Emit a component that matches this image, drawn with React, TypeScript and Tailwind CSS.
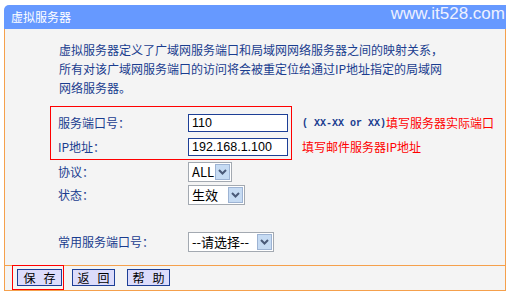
import React from "react";

const Chevron = () => (
  <svg width="9" height="6" viewBox="0 0 9 6">
    <path d="M1 1 L4.5 4.5 L8 1" fill="none" stroke="#4a5a78" strokeWidth="2" />
  </svg>
);

function Select({ w, text }: { w: string; text: string }) {
  return (
    <div className={`flex h-[20px] ${w} items-center border border-[#a3a9b1] bg-white`}>
      <span className="flex-1 whitespace-nowrap pl-[3px] text-[13px] leading-[18px] text-black">{text}</span>
      <span className="mr-px flex h-[16px] w-[15px] items-center justify-center border border-[#9db3d3] bg-[#c6dbf3]">
        <Chevron />
      </span>
    </div>
  );
}

function Btn({ a, b, w }: { a: string; b: string; w: string }) {
  return (
    <div className={`flex h-[17px] ${w} items-center justify-center gap-[8px] border border-[#1d3f96] bg-[#dcdcfb] text-[12px] leading-[12px] text-black`}>
      <span>{a}</span>
      <span>{b}</span>
    </div>
  );
}

export default function App() {
  return (
    <div className="h-[294px] w-[509px] bg-white pl-[4px] pt-[5px] font-['Noto_Sans_CJK_SC','Liberation_Sans',sans-serif]">
      <div className="relative w-[502px]">
        <div className="flex h-[24px] items-center rounded-tl-[5px] bg-[#6699ff] pl-[7px] text-[12px] text-white">
          虚拟服务器
        </div>
        <span className="absolute right-[1px] top-0 font-['Liberation_Sans',sans-serif] text-[17px] leading-[17px] text-[#eef1ff]">
          www.it528.com
        </span>
        <div className="border-x border-b border-[#f5a04c] bg-[#f4f4f4]">
          <div className="h-[236px] pt-[11px] text-[12px] text-[#1a3d8f]">
            <p className="ml-[54px] whitespace-nowrap leading-[19px]">
              虚拟服务器定义了广域网服务端口和局域网网络服务器之间的映射关系，
              <br />
              所有对该广域网服务端口的访问将会被重定位给通过IP地址指定的局域网
              <br />
              网络服务器。
            </p>
            <div className="ml-[45px] mt-[9px] flex">
              <div className="w-[242px] border border-[#ff0000] pl-[7px] pt-[4px]">
                <div className="flex h-[24px] items-center">
                  <span className="w-[130px]">服务端口号：</span>
                  <div className="flex h-[18px] w-[100px] items-center border border-[#1d3f96] bg-white pl-[3px] font-['Liberation_Sans',sans-serif] text-[12.5px] text-black">
                    110
                  </div>
                </div>
                <div className="flex h-[24px] items-center">
                  <span className="w-[130px]">IP地址：</span>
                  <div className="flex h-[18px] w-[100px] items-center border border-[#1d3f96] bg-white pl-[3px] font-['Liberation_Sans',sans-serif] text-[12.5px] text-black">
                    192.168.1.100
                  </div>
                </div>
              </div>
              <div className="ml-[10px] pt-[5px]">
                <div className="flex h-[24px] items-center whitespace-nowrap">
                  <span className="font-['Liberation_Mono',monospace] text-[10px] font-bold text-[#1a3d8f] whitespace-pre">( XX-XX or XX)</span>
                  <span className="text-[#ff0000]">填写服务器实际端口</span>
                </div>
                <div className="flex h-[24px] items-center whitespace-nowrap text-[#ff0000]">
                  填写邮件服务器IP地址
                </div>
              </div>
            </div>
            <div className="ml-[53px]">
              <div className="flex h-[23px] items-center">
                <span className="w-[130px]">协议：</span>
                <Select w="w-[44px]" text="ALL" />
              </div>
              <div className="flex h-[23px] items-center">
                <span className="w-[130px]">状态：</span>
                <Select w="w-[57px]" text="生效" />
              </div>
              <div className="mt-[24px] flex h-[23px] items-center">
                <span className="w-[130px]">常用服务端口号：</span>
                <Select w="w-[86px]" text="--请选择--" />
              </div>
            </div>
          </div>
          <div className="flex h-[25px] items-start border-t border-[#f5a04c] pl-[7px]">
            <div className="-mt-px border border-[#ff0000] pb-[3px] pl-[4px] pr-[1px] pt-[3px]">
              <Btn a="保" b="存" w="w-[45px]" />
            </div>
            <div className="ml-[8px] mt-[3px]">
              <Btn a="返" b="回" w="w-[43px]" />
            </div>
            <div className="ml-[12px] mt-[3px]">
              <Btn a="帮" b="助" w="w-[43px]" />
            </div>
          </div>
        </div>
      </div>
    </div>
  );
}
